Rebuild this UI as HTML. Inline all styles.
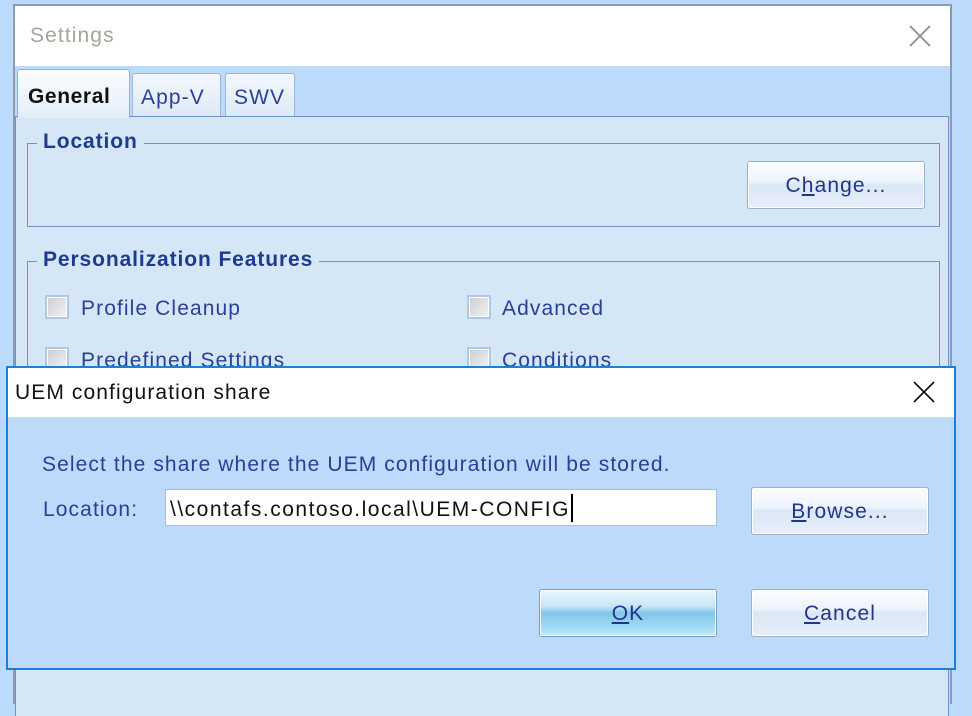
<!DOCTYPE html>
<html><head><meta charset="utf-8"><style>
*{margin:0;padding:0;box-sizing:border-box}
body{width:972px;height:692px;background:#bcdafb;position:relative;overflow:hidden;font-family:"Liberation Sans",sans-serif;letter-spacing:1.1px}
.abs{position:absolute}
.t{color:#2a3f96;font-size:21px;white-space:nowrap}
.btn{position:absolute;border:1px solid #98b2c9;border-radius:3px;background:linear-gradient(#fbfdff 0%,#eef4fc 40%,#dce7f5 50%,#e6eefa 100%);box-shadow:inset 0 0 0 1px #fff;text-align:center;color:#22358a;font-size:21px}
.cb{position:absolute;width:24px;height:24px;border:2px solid #b0c8e2;background:linear-gradient(135deg,#c9cdd4,#f2f3f5);box-shadow:inset 0 0 0 1px #fff}
u{text-decoration:underline}
b{letter-spacing:0.9px}
</style></head><body>
<div class="abs" style="left:13px;top:4px;width:939px;height:700px;border:2px solid #8b9bb0;border-bottom:none;background:#bcdafb"></div>
<div class="abs" style="left:15px;top:6px;width:935px;height:60px;background:#fff"></div>
<div class="abs" style="left:30px;top:24px;font-size:21px;color:#a9a39b">Settings</div>
<svg class="abs" style="left:908px;top:24px" width="24" height="24"><path d="M2 2L22 22M22 2L2 22" stroke="#8a8a8a" stroke-width="1.6"/></svg>
<div class="abs" style="left:15px;top:116px;width:934px;height:600px;background:#d5e6f6;border:1px solid #6f93c6;border-bottom:none"></div>
<div class="abs" style="left:17px;top:69px;width:113px;height:49px;background:linear-gradient(#fbfdff,#e3eef9);border:1px solid #8fb0d8;border-bottom:none;border-radius:3px 3px 0 0"></div>
<div class="abs" style="left:28px;top:85px;font-size:21px;font-weight:bold;color:#111;letter-spacing:0.6px">General</div>
<div class="abs" style="left:132px;top:73px;width:89px;height:43px;background:linear-gradient(#f4f8fd,#dde9f6);border:1px solid #9bb6d6;border-bottom:none;border-radius:3px 3px 0 0"></div>
<div class="abs t" style="left:141px;top:86px">App-V</div>
<div class="abs" style="left:225px;top:73px;width:70px;height:43px;background:linear-gradient(#f4f8fd,#dde9f6);border:1px solid #9bb6d6;border-bottom:none;border-radius:3px 3px 0 0"></div>
<div class="abs t" style="left:234px;top:86px">SWV</div>
<div class="abs" style="left:27px;top:143px;width:913px;height:84px;border:1px solid #6f93c6"></div>
<div class="abs" style="left:37px;top:130px;padding:0 6px;background:#d5e6f6;font-size:21px;font-weight:bold;color:#1d3b8f"><b>Location</b></div>
<div class="btn" style="left:747px;top:161px;width:178px;height:48px;line-height:47px">C<u>h</u>ange...</div>
<div class="abs" style="left:27px;top:261px;width:913px;height:200px;border:1px solid #6f93c6"></div>
<div class="abs" style="left:37px;top:248px;padding:0 6px;background:#d5e6f6;font-size:21px;font-weight:bold;color:#1d3b8f"><b>Personalization Features</b></div>
<div class="cb" style="left:45px;top:295px"></div><div class="abs t" style="left:81px;top:297px">Profile Cleanup</div>
<div class="cb" style="left:467px;top:295px"></div><div class="abs t" style="left:502px;top:297px">Advanced</div>
<div class="cb" style="left:45px;top:347px"></div><div class="abs t" style="left:81px;top:349px">Predefined Settings</div>
<div class="cb" style="left:467px;top:347px"></div><div class="abs t" style="left:502px;top:349px">Conditions</div>
<div class="abs" style="left:6px;top:366px;width:950px;height:304px;border:2px solid #1e7fd8;background:#bddafb"></div>
<div class="abs" style="left:8px;top:368px;width:946px;height:49px;background:#fff"></div>
<div class="abs" style="left:15px;top:381px;font-size:21px;color:#111">UEM configuration share</div>
<svg class="abs" style="left:913px;top:381px" width="22" height="22"><path d="M1 1L21 21M21 1L1 21" stroke="#111" stroke-width="1.6"/></svg>
<div class="abs t" style="left:42px;top:453px">Select the share where the UEM configuration will be stored.</div>
<div class="abs t" style="left:43px;top:498px">Location:</div>
<div class="abs" style="left:165px;top:489px;width:552px;height:37px;background:#fff;border:1px solid #a8bfdc"></div>
<div class="abs" style="left:170px;top:498px;font-size:21px;color:#111;white-space:nowrap;letter-spacing:1.5px">\\contafs.contoso.local\UEM-CONFIG</div>
<div class="abs" style="left:571px;top:494px;width:2px;height:28px;background:#000"></div>
<div class="btn" style="left:751px;top:487px;width:178px;height:48px;line-height:47px"><u>B</u>rowse...</div>
<div class="btn" style="left:539px;top:589px;width:178px;height:48px;line-height:47px;border-color:#7aa0bd;background:linear-gradient(#eaf6fd 0%,#c9e6f8 35%,#82c6ea 50%,#a6def6 85%,#b9f1fc 100%)"><u>O</u>K</div>
<div class="btn" style="left:751px;top:589px;width:178px;height:48px;line-height:47px"><u>C</u>ancel</div>
</body></html>
